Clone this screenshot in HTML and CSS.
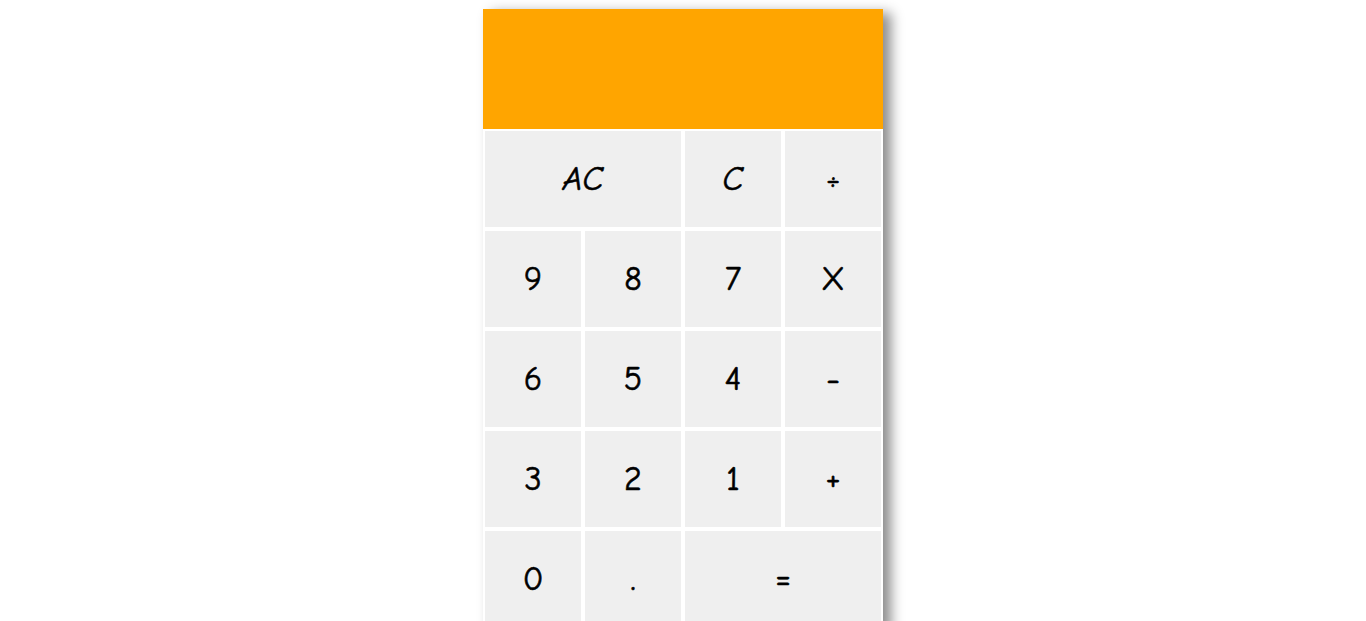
FILE: index.html
```html
<!DOCTYPE html>
<html>
<head>
<meta charset="utf-8">
<link rel="stylesheet" href="styles.css">
</head>
<body>
<div class="calc">
  <div class="display"></div>
  <div class="keys">
    <button class="key wide ital">AC</button>
    <button class="key ital">C</button>
    <button class="key">÷</button>
    <button class="key">9</button>
    <button class="key">8</button>
    <button class="key">7</button>
    <button class="key">X</button>
    <button class="key">6</button>
    <button class="key">5</button>
    <button class="key">4</button>
    <button class="key">-</button>
    <button class="key">3</button>
    <button class="key">2</button>
    <button class="key">1</button>
    <button class="key">+</button>
    <button class="key">0</button>
    <button class="key">.</button>
    <button class="key wide">=</button>
  </div>
</div>
</body>
</html>
```
FILE: styles.css
```css
html, body {
  margin: 0;
  padding: 0;
  background: #ffffff;
  overflow: hidden;
}
body {
  padding-top: 9px;
}
.calc {
  width: 400px;
  margin: 0 auto;
  box-shadow: 8px 4px 12px rgba(0, 0, 0, 0.45);
  font-family: "Comic Sans MS", "Comic Neue", "DejaVu Sans", sans-serif;
}
.display {
  height: 120px;
  background: #ffa500;
}
.keys {
  display: grid;
  grid-template-columns: repeat(4, 100px);
  grid-auto-rows: 100px;
}
.key {
  margin: 0;
  padding: 0;
  border: 2px solid #ffffff;
  background: #efefef;
  color: #000000;
  font-family: inherit;
  font-size: 34px;
  font-weight: 400;
  -webkit-text-stroke: 0.6px #000000;
  display: flex;
  align-items: center;
  justify-content: center;
}
.wide {
  grid-column: span 2;
}
.ital {
  font-style: italic;
}
```
